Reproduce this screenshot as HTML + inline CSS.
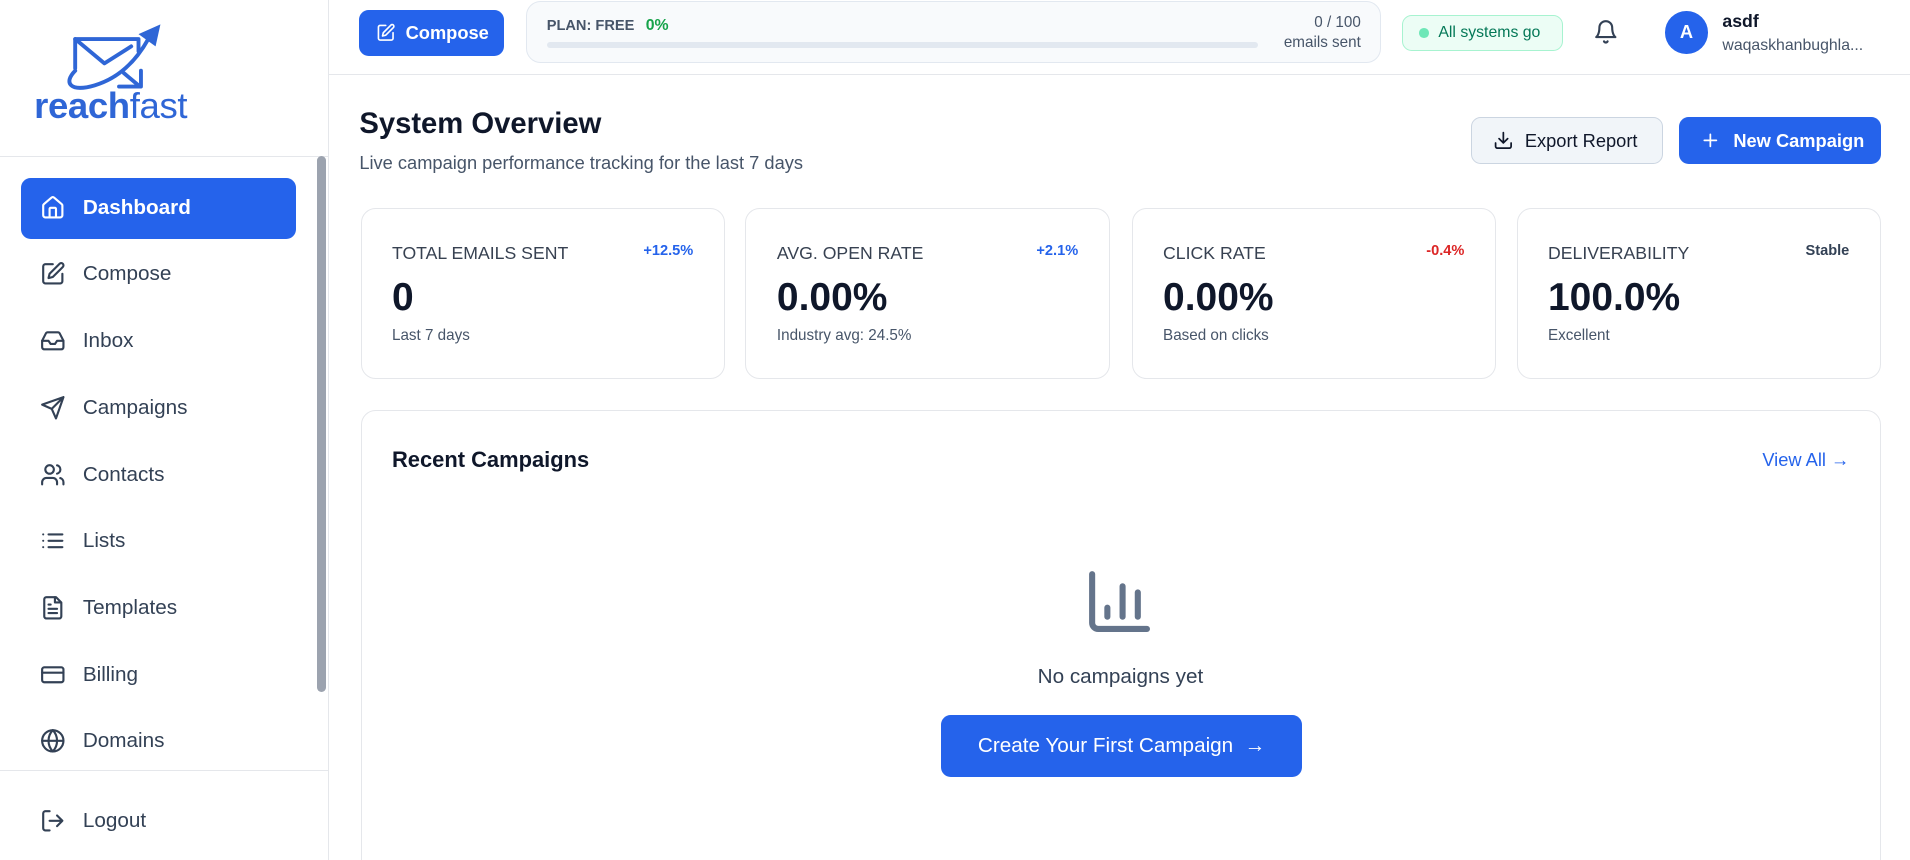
<!DOCTYPE html>
<html><head><meta charset="utf-8"><style>
*{box-sizing:border-box;margin:0;padding:0}
html,body{width:1910px;height:860px;overflow:hidden;background:#fff}
#root{zoom:1.2181;width:1568px;height:706px;position:relative;font-family:"Liberation Sans",sans-serif;color:#0f172a;background:#fff}
.abs{position:absolute}
.sb{left:0;top:0;width:270px;height:706px;border-right:1px solid #e5e7eb;background:#fff}
.nav{position:absolute;left:17px;width:226px;height:50px;border-radius:8px;display:flex;align-items:center;padding-left:16px;font-size:17px;color:#334155}
.nav svg{width:21px;height:21px;margin-right:14px;fill:none;stroke:currentColor;stroke-width:2;stroke-linecap:round;stroke-linejoin:round}
.nav.act{background:#2563eb;color:#fff;font-weight:bold}
.ic{fill:none;stroke:currentColor;stroke-width:2;stroke-linecap:round;stroke-linejoin:round}
.card{position:absolute;top:171px;width:299px;height:140px;border:1px solid #e5e7eb;border-radius:12px;background:#fff}
.card .l{position:absolute;left:25px;top:28px;font-size:14.5px;color:#374151}
.card .d{position:absolute;right:25px;top:28px;font-size:12px;font-weight:bold}
.card .v{position:absolute;left:25px;top:55px;font-size:32px;font-weight:bold;color:#0f172a}
.card .s{position:absolute;left:25px;top:97px;font-size:12.5px;color:#475569}
</style></head><body><div id="root">
<div class="abs sb">
 <svg class="abs" style="left:52px;top:18px" width="82" height="58" viewBox="0 0 82 58">
  <g fill="none" stroke="#2f66d6" stroke-width="3.2" stroke-linejoin="round" stroke-linecap="round">
   <path d="M10 38 L10 14 L62 14 L62 24"/>
   <path d="M10 14 L34 34 L56 20"/>
   <path d="M46 53 L64 53 L64 40 M50 42 L62 52"/>
   <path d="M10 40 C0 50 6 58 26 52 C46 46 60 32 70 14"/>
  </g>
  <path d="M62 10 L80 2 L76 20 Z" fill="#2f66d6"/>
 </svg>
 <div class="abs" style="left:28px;top:70px;font-size:30px;color:#2f66d6;letter-spacing:-0.3px"><b>reach</b>fast</div>
 <div class="abs" style="left:0;top:128px;width:269px;border-top:1px solid #e5e7eb"></div>
 <div class="abs" style="left:260px;top:128px;width:8px;height:440px;background:#9ca3af;border-radius:4px"></div>
 <div class="nav act" style="top:146px"><svg viewBox="0 0 24 24"><path d="M15 21v-8a1 1 0 0 0-1-1h-4a1 1 0 0 0-1 1v8"/><path d="M3 10a2 2 0 0 1 .7-1.5l7-6a2 2 0 0 1 2.6 0l7 6A2 2 0 0 1 21 10v9a2 2 0 0 1-2 2H5a2 2 0 0 1-2-2z"/></svg>Dashboard</div>
 <div class="nav" style="top:200px"><svg viewBox="0 0 24 24"><path d="M12 3H5a2 2 0 0 0-2 2v14a2 2 0 0 0 2 2h14a2 2 0 0 0 2-2v-7"/><path d="M18.4 2.6a2.1 2.1 0 0 1 3 3L12 15l-4 1 1-4z"/></svg>Compose</div>
 <div class="nav" style="top:255px"><svg viewBox="0 0 24 24"><path d="M22 12h-6l-2 3h-4l-2-3H2"/><path d="M5.5 5.1 2 12v6a2 2 0 0 0 2 2h16a2 2 0 0 0 2-2v-6l-3.5-6.9A2 2 0 0 0 16.8 4H7.2a2 2 0 0 0-1.7 1.1z"/></svg>Inbox</div>
 <div class="nav" style="top:310px"><svg viewBox="0 0 24 24"><path d="M22 2 11 13M22 2l-7 20-4-9-9-4z"/></svg>Campaigns</div>
 <div class="nav" style="top:365px"><svg viewBox="0 0 24 24"><path d="M16 21v-2a4 4 0 0 0-4-4H6a4 4 0 0 0-4 4v2"/><circle cx="9" cy="7" r="4"/><path d="M22 21v-2a4 4 0 0 0-3-3.9M16 3.1a4 4 0 0 1 0 7.8"/></svg>Contacts</div>
 <div class="nav" style="top:419px"><svg viewBox="0 0 24 24"><path d="M3 6h.01M3 12h.01M3 18h.01M8 6h13M8 12h13M8 18h13"/></svg>Lists</div>
 <div class="nav" style="top:474px"><svg viewBox="0 0 24 24"><path d="M15 2H6a2 2 0 0 0-2 2v16a2 2 0 0 0 2 2h12a2 2 0 0 0 2-2V7z"/><path d="M14 2v5h5M16 13H8M16 17H8M10 9H8"/></svg>Templates</div>
 <div class="nav" style="top:529px"><svg viewBox="0 0 24 24"><rect x="2" y="5" width="20" height="14" rx="2"/><path d="M2 10h20"/></svg>Billing</div>
 <div class="nav" style="top:583px"><svg viewBox="0 0 24 24"><circle cx="12" cy="12" r="10"/><path d="M12 2a14.5 14.5 0 0 0 0 20 14.5 14.5 0 0 0 0-20M2 12h20"/></svg>Domains</div>
 <div class="abs" style="left:0;top:632px;width:269px;border-top:1px solid #e5e7eb"></div>
 <div class="nav" style="top:649px"><svg viewBox="0 0 24 24"><path d="M9 21H5a2 2 0 0 1-2-2V5a2 2 0 0 1 2-2h4M16 17l5-5-5-5M21 12H9"/></svg>Logout</div>
</div>

<div class="abs" style="left:270px;top:61px;width:1298px;border-top:1px solid #e5e7eb"></div>
<div class="abs" style="left:295px;top:8px;width:119px;height:38px;background:#2563eb;border-radius:8px;color:#fff;font-weight:bold;font-size:15px;display:flex;align-items:center;padding-left:14px"><svg class="ic" width="16" height="16" viewBox="0 0 24 24" style="margin-right:8px"><path d="M12 3H5a2 2 0 0 0-2 2v14a2 2 0 0 0 2 2h14a2 2 0 0 0 2-2v-7"/><path d="M18.4 2.6a2.1 2.1 0 0 1 3 3L12 15l-4 1 1-4z"/></svg>Compose</div>
<div class="abs" style="left:432px;top:1px;width:702px;height:51px;background:#f8fafc;border:1px solid #e2e8f0;border-radius:12px">
 <div class="abs" style="left:16px;top:12px;font-size:12px;font-weight:bold;color:#475569">PLAN: FREE <span style="color:#16a34a;margin-left:6px;font-size:13px">0%</span></div>
 <div class="abs" style="left:16px;top:33px;width:584px;height:5px;background:#e2e8f0;border-radius:3px"></div>
 <div class="abs" style="right:16px;top:9px;font-size:12.5px;color:#475569;text-align:right;line-height:16px">0 / 100<br>emails sent</div>
</div>
<div class="abs" style="left:1151px;top:12px;width:132px;height:30px;background:#ecfdf5;border:1px solid #a7f3d0;border-radius:8px;font-size:13px;color:#047857;display:flex;align-items:center;padding-left:13px"><span style="width:8px;height:8px;border-radius:50%;background:#6ee7b7;margin-right:8px"></span>All systems go</div>
<svg class="ic abs" style="left:1308px;top:16px;color:#334155" width="21" height="21" viewBox="0 0 24 24"><path d="M6 8a6 6 0 0 1 12 0c0 7 3 9 3 9H3s3-2 3-9M10.3 21a1.9 1.9 0 0 0 3.4 0"/></svg>
<div class="abs" style="left:1367px;top:9px;width:35px;height:35px;border-radius:50%;background:#2563eb;color:#fff;font-weight:bold;font-size:15px;display:flex;align-items:center;justify-content:center">A</div>
<div class="abs" style="left:1414px;top:9px;font-size:14.5px;font-weight:bold;color:#0f172a">asdf</div>
<div class="abs" style="left:1414px;top:30px;font-size:13px;color:#475569">waqaskhanbughla...</div>

<div class="abs" style="left:295px;top:89px;font-size:24px;font-weight:bold">System Overview</div>
<div class="abs" style="left:295px;top:125px;font-size:15px;color:#475569">Live campaign performance tracking for the last 7 days</div>
<div class="abs" style="left:1208px;top:96px;width:157px;height:39px;background:#f1f5f9;border:1px solid #cbd5e1;border-radius:8px;font-size:15px;display:flex;align-items:center;padding-left:17px;color:#0f172a"><svg class="ic" width="17" height="17" viewBox="0 0 24 24" style="margin-right:9px"><path d="M21 15v4a2 2 0 0 1-2 2H5a2 2 0 0 1-2-2v-4M7 10l5 5 5-5M12 15V3"/></svg>Export Report</div>
<div class="abs" style="left:1378px;top:96px;width:166px;height:39px;background:#2563eb;border-radius:8px;font-size:15px;font-weight:bold;color:#fff;display:flex;align-items:center;padding-left:18px"><svg class="ic" width="17" height="17" viewBox="0 0 24 24" style="margin-right:10px"><path d="M5 12h14M12 5v14"/></svg>New Campaign</div>

<div class="card" style="left:296px"><div class="l">TOTAL EMAILS SENT</div><div class="d" style="color:#2563eb">+12.5%</div><div class="v">0</div><div class="s">Last 7 days</div></div>
<div class="card" style="left:612px"><div class="l">AVG. OPEN RATE</div><div class="d" style="color:#2563eb">+2.1%</div><div class="v">0.00%</div><div class="s">Industry avg: 24.5%</div></div>
<div class="card" style="left:929px"><div class="l">CLICK RATE</div><div class="d" style="color:#dc2626">-0.4%</div><div class="v">0.00%</div><div class="s">Based on clicks</div></div>
<div class="card" style="left:1245px"><div class="l">DELIVERABILITY</div><div class="d" style="color:#334155">Stable</div><div class="v">100.0%</div><div class="s">Excellent</div></div>

<div class="abs" style="left:296px;top:337px;width:1248px;height:400px;border:1px solid #e5e7eb;border-radius:12px">
 <div class="abs" style="left:25px;top:29px;font-size:18px;font-weight:bold">Recent Campaigns</div>
 <div class="abs" style="right:25px;top:31px;font-size:15px;color:#2563eb">View All →</div>
 <svg class="abs" style="left:592px;top:126px;color:#64748b" width="60" height="60" viewBox="0 0 24 24" fill="none" stroke="currentColor" stroke-width="2" stroke-linecap="round"><path d="M3 3v16a2 2 0 0 0 2 2h16M8 17v-3M13 17V7M18 17V9"/></svg>
 <div class="abs" style="left:0;width:1246px;top:208px;text-align:center;font-size:17px;color:#334155">No campaigns yet</div>
 <div class="abs" style="left:476px;top:249px;width:296px;height:51px;background:#2563eb;border-radius:8px;color:#fff;font-size:17px;display:flex;align-items:center;justify-content:center">Create Your First Campaign&nbsp; →</div>
</div>
</div></body></html>
